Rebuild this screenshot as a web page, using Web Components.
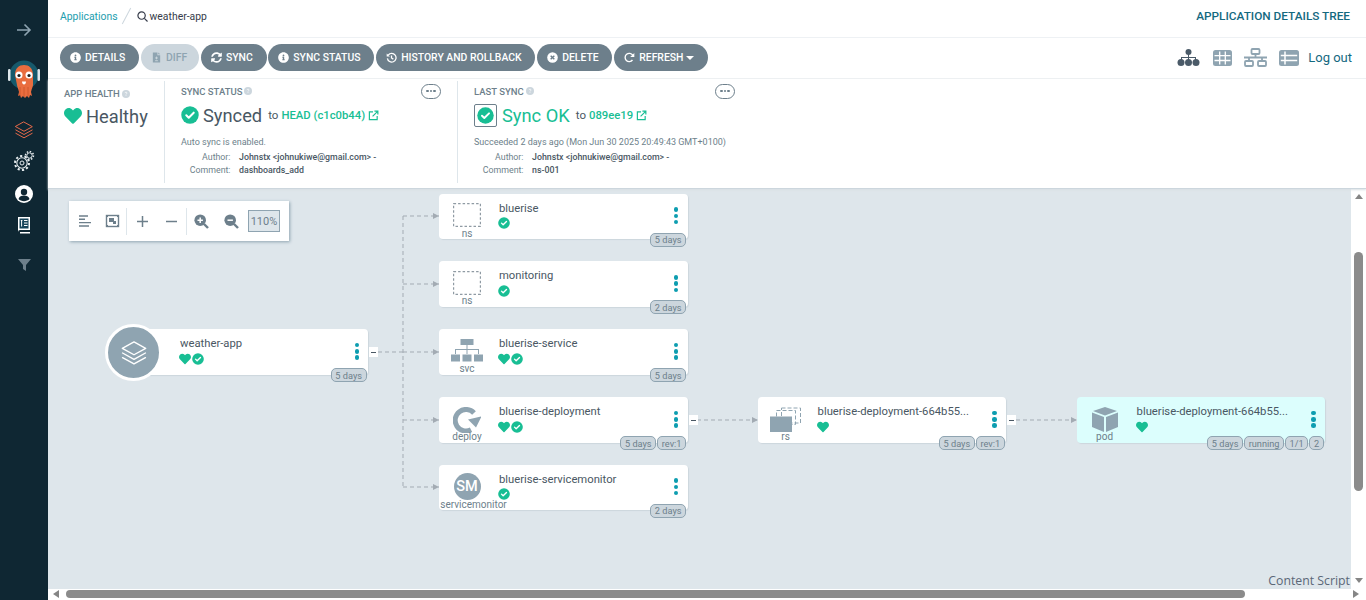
<!DOCTYPE html>
<html>
<head>
<meta charset="utf-8">
<title>weather-app</title>
<style>
  html, body { margin: 0; height: 100%; overflow: hidden; background: #fff; }
  body { font-family: Roboto, "Liberation Sans", sans-serif; color: #495763; }
</style>
</head>
<body>
<app-shell>
  <side-nav slot="nav"></side-nav>
  <top-bar slot="top"></top-bar>
  <action-bar slot="top">
    <action-button icon="info">DETAILS</action-button>
    <action-button icon="diff" disabled>DIFF</action-button>
    <action-button icon="sync">SYNC</action-button>
    <action-button icon="info">SYNC STATUS</action-button>
    <action-button icon="history">HISTORY AND ROLLBACK</action-button>
    <action-button icon="times">DELETE</action-button>
    <action-button icon="redo" caret>REFRESH</action-button>
  </action-bar>
  <status-summary slot="top"></status-summary>
  <graph-canvas slot="canvas">
    <graph-node app name="weather-app" health sync collapser style="left:77px;top:140px;width:243px">
      <node-tag slot="tags">5 days</node-tag>
    </graph-node>
    <graph-node kind="ns" name="bluerise" sync style="left:391px;top:4.6px">
      <node-tag slot="tags">5 days</node-tag>
    </graph-node>
    <graph-node kind="ns" name="monitoring" sync style="left:391px;top:72.3px">
      <node-tag slot="tags">2 days</node-tag>
    </graph-node>
    <graph-node kind="svc" name="bluerise-service" health sync style="left:391px;top:140px">
      <node-tag slot="tags">5 days</node-tag>
    </graph-node>
    <graph-node kind="deploy" name="bluerise-deployment" health sync collapser style="left:391px;top:208px">
      <node-tag slot="tags">5 days</node-tag>
      <node-tag slot="tags">rev:1</node-tag>
    </graph-node>
    <graph-node kind="servicemonitor" name="bluerise-servicemonitor" sync style="left:391px;top:275.6px">
      <node-tag slot="tags">2 days</node-tag>
    </graph-node>
    <graph-node kind="rs" name="bluerise-deployment-664b55..." health collapser style="left:709.6px;top:208px">
      <node-tag slot="tags">5 days</node-tag>
      <node-tag slot="tags">rev:1</node-tag>
    </graph-node>
    <graph-node kind="pod" name="bluerise-deployment-664b55..." health highlight style="left:1028.6px;top:208px">
      <node-tag slot="tags">5 days</node-tag>
      <node-tag slot="tags">running</node-tag>
      <node-tag slot="tags">1/1</node-tag>
      <node-tag slot="tags">2</node-tag>
    </graph-node>
  </graph-canvas>
</app-shell>

<script>
const GREEN = '#18be94';
const GRAY = '#8fa4b1';

const HEART = `<svg viewBox="0 0 512 512" width="100%" height="100%" style="display:block"><path fill="${GREEN}" d="M462.3 62.6C407.5 15.9 326 24.3 275.7 76.2L256 96.5l-19.7-20.3C186.1 24.3 104.5 15.9 49.7 62.6c-62.8 53.6-66.1 149.8-9.9 207.9l193.5 199.8c12.5 12.9 32.8 12.9 45.3 0l193.5-199.8c56.3-58.1 53-154.3-9.8-207.9z"/></svg>`;
const CHECK = `<svg viewBox="0 0 512 512" width="100%" height="100%" style="display:block"><circle cx="256" cy="256" r="248" fill="${GREEN}"/><path fill="none" stroke="#fff" stroke-width="58" stroke-linecap="round" stroke-linejoin="round" d="M150 262l70 70 142-142"/></svg>`;
const INFO_PATH = 'M256 8C119.043 8 8 119.083 8 256c0 136.997 111.043 248 248 248s248-111.003 248-248C504 119.083 392.957 8 256 8zm0 110c23.196 0 42 18.804 42 42s-18.804 42-42 42-42-18.804-42-42 18.804-42 42-42zm56 254c0 6.627-5.373 12-12 12h-88c-6.627 0-12-5.373-12-12v-24c0-6.627 5.373-12 12-12h12v-64h-12c-6.627 0-12-5.373-12-12v-24c0-6.627 5.373-12 12-12h64c6.627 0 12 5.373 12 12v100h12c6.627 0 12 5.373 12 12v24z';
const EXTERNAL = `<svg viewBox="0 0 24 24" width="100%" height="100%" style="display:block" fill="none" stroke="${GREEN}" stroke-width="2.6"><path d="M11 4H3v17h17v-8"/><path d="M10 14L21 3M14 2.5h7.5V10"/></svg>`;
const STACK = (color, w) => `<svg viewBox="0 0 24 24" width="100%" height="100%" style="display:block" fill="none" stroke="${color}" stroke-width="${w}" stroke-linejoin="round" stroke-linecap="round"><path d="M12 2.5l10 5.5-10 5.5L2 8z"/><path d="M2.2 12l9.8 5.4L21.8 12"/><path d="M2.2 16l9.8 5.4L21.8 16"/></svg>`;

const BUTTON_ICONS = {
  info: `<svg viewBox="0 0 512 512"><path fill="#fff" d="${INFO_PATH}"/></svg>`,
  diff: `<svg viewBox="0 0 24 24"><path fill="#8fa4b1" d="M4 1h10v6h6v16H4z"/><path fill="#8fa4b1" d="M16 1l4 4h-4z"/><path fill="none" stroke="#ccd6dd" stroke-width="2" d="M12 10v6M9 13h6M9 19h6"/></svg>`,
  sync: `<svg viewBox="0 0 512 512"><path fill="#fff" d="M370.72 133.28C339.458 104.008 298.888 87.962 255.848 88c-77.458.068-144.328 53.178-162.791 126.85-1.344 5.363-6.122 9.15-11.651 9.15H24.103c-7.498 0-13.194-6.807-11.807-14.176C33.933 94.924 134.813 8 256 8c66.448 0 126.791 26.136 171.315 68.685L463.03 40.97C478.149 25.851 504 36.559 504 57.941V192c0 13.255-10.745 24-24 24H345.941c-21.382 0-32.09-25.851-16.971-40.971l41.75-41.749zM32 296h134.059c21.382 0 32.09 25.851 16.971 40.971l-41.75 41.75c31.262 29.273 71.835 45.319 114.876 45.28 77.418-.07 144.315-53.144 162.787-126.849 1.344-5.363 6.122-9.15 11.651-9.15h57.304c7.498 0 13.194 6.807 11.807 14.176C478.067 417.076 377.187 504 256 504c-66.448 0-126.791-26.136-171.315-68.685L48.97 471.03C33.851 486.149 8 475.441 8 454.059V320c0-13.255 10.745-24 24-24z"/></svg>`,
  history: `<svg viewBox="0 0 24 24" fill="none" stroke="#fff" stroke-width="2.8"><path d="M5 6.5A9.5 9.5 0 1 1 3 14"/><path d="M1.5 3v7h7z" fill="#fff" stroke="none"/><path d="M12 7.5V13l4 2.5"/></svg>`,
  times: `<svg viewBox="0 0 24 24"><circle cx="12" cy="12" r="11.5" fill="#fff"/><path stroke="#6d7f8b" stroke-width="3" d="M8 8l8 8M16 8l-8 8"/></svg>`,
  redo: `<svg viewBox="0 0 24 24" fill="none" stroke="#fff" stroke-width="3"><path d="M18.5 17.5A9 9 0 1 1 19 7"/><path d="M22.5 2v9h-9z" fill="#fff" stroke="none"/></svg>`,
};

class AppShell extends HTMLElement {
  constructor() {
    super();
    this.attachShadow({ mode: 'open' });
    this.shadowRoot.innerHTML = `
      <style>
        :host { display: flex; height: 600px; width: 1366px; }
        .main { flex: 1; min-width: 0; display: flex; flex-direction: column; }
        .middle { flex: 1; min-height: 0; display: flex; }
        .horizontal { height: 11.5px; background: #fff; display: flex; align-items: center; padding: 0 7px 0 5px; }
      </style>
      <slot name="nav"></slot>
      <div class="main">
        <slot name="top"></slot>
        <div class="middle">
          <slot name="canvas"></slot>
          <scroll-track></scroll-track>
        </div>
        <div class="horizontal"><scroll-track horizontal></scroll-track></div>
      </div>`;
  }
}

class ScrollTrack extends HTMLElement {
  constructor() {
    super();
    this.attachShadow({ mode: 'open' });
  }

  connectedCallback() {
    const horizontal = this.hasAttribute('horizontal');
    this.shadowRoot.innerHTML = `
      <style>
        :host { display: flex; background: #fff; flex: none; }
        :host([horizontal]) { flex: 1; height: 100%; align-items: center; }
        :host(:not([horizontal])) { width: 15px; flex-direction: column; align-items: center; padding: 5px 0 6px; box-sizing: border-box; }
        .arrow { width: 0; height: 0; flex: none; }
        .up { border: 4.5px solid transparent; border-top: 0; border-bottom: 5px solid #858585; }
        .down { border: 4.5px solid transparent; border-bottom: 0; border-top: 5px solid #858585; margin-top: auto; }
        .left { border: 4.5px solid transparent; border-left: 0; border-right: 6px solid #858585; }
        .right { border: 4.5px solid transparent; border-right: 0; border-left: 6px solid #858585; margin-left: auto; }
        .thumb { background: #8b8b8b; border-radius: 5px; flex: none; }
        :host(:not([horizontal])) .thumb { width: 9px; height: 239px; margin-top: 53px; }
        :host([horizontal]) .thumb { height: 8px; width: 1179px; margin-left: 7px; }
      </style>
      <span class="arrow ${horizontal ? 'left' : 'up'}"></span>
      <span class="thumb"></span>
      <span class="arrow ${horizontal ? 'right' : 'down'}"></span>`;
  }
}

class SideNav extends HTMLElement {
  constructor() {
    super();
    this.attachShadow({ mode: 'open' });
    this.shadowRoot.innerHTML = `
      <style>
        :host { display: flex; flex-direction: column; align-items: center; width: 48px; flex: none; background: #0f2733; box-sizing: border-box; padding-top: 23px; }
        svg { display: block; flex: none; }
      </style>
      <svg width="16" height="14" viewBox="0 0 16 14" fill="none" stroke="#8fa4b1" stroke-width="1.6"><path d="M1 7h13M8.5 1.5L14 7l-5.500 5.500"/></svg>
      <svg style="margin-top:22px" width="32" height="42" viewBox="0 0 32 42">
        <circle cx="16" cy="16" r="14.500" fill="#17596b"/>
        <rect x="0" y="10" width="2.500" height="12" rx="1.200" fill="#dfe8ec"/>
        <rect x="29.500" y="10" width="2.500" height="12" rx="1.200" fill="#dfe8ec"/>
        <path d="M7 16c0-7 4-10 9-10s9 3 9 10v10c0 1-1 3-2 7l1 4-2-1-1 3-2-2-2 2-2-2-2 2-1-3-2 1 1-4c-1-4-2-6-2-7z" fill="#e96d3f"/>
        <path d="M12 28v9M16 28v10M20 28v9" stroke="#c9552b" stroke-width="0.800"/>
        <circle cx="11" cy="16" r="3.500" fill="#fff"/><circle cx="21" cy="16" r="3.500" fill="#fff"/>
        <circle cx="11" cy="16.500" r="1.600" fill="#222"/><circle cx="21" cy="16.500" r="1.600" fill="#222"/>
        <path d="M14 22.500h4c0 2-1 3-2 3s-2-1-2-3z" fill="#fff"/>
      </svg>
      <div style="width:20px;height:20px;margin-top:19px">${STACK('#e5694a', 1.200)}</div>
      <svg style="margin-top:10px" width="22" height="22" viewBox="0 0 22 22" fill="none" stroke="#e6ecef">
        <circle cx="9" cy="13" r="5.200" stroke-width="1.100"/>
        <circle cx="9" cy="13" r="7" stroke-width="2" stroke-dasharray="2.200 2.200"/>
        <circle cx="9" cy="13" r="2" stroke-width="1"/>
        <circle cx="16.500" cy="5.500" r="2.700" stroke-width="1"/>
        <circle cx="16.500" cy="5.500" r="4" stroke-width="1.500" stroke-dasharray="1.500 1.600"/>
      </svg>
      <svg style="margin-top:13px" width="18" height="18" viewBox="0 0 18 18">
        <circle cx="9" cy="9" r="9" fill="#fff"/>
        <circle cx="9" cy="7" r="3.200" fill="#0f2733"/>
        <path d="M3.500 14c.8-2.500 3-3.400 5.500-3.400s4.700.9 5.500 3.400c-1.400 1.300-3.300 2.200-5.500 2.200S4.900 15.300 3.500 14z" fill="#0f2733"/>
      </svg>
      <svg style="margin-top:13px" width="14" height="18" viewBox="0 0 14 18">
        <path d="M1 1h12v13H3a2 2 0 0 0-2 2z" fill="#fff"/>
        <path d="M3 16h10v1.500H3z" fill="#fff"/>
        <rect x="2.500" y="2.500" width="9" height="10" fill="#17445a"/>
        <path d="M7 4.500h3.500M7 7h3.500M7 9.500h3.500M3.800 4.500h1.600M4.600 4.500v6" stroke="#fff" stroke-width="1"/>
      </svg>
      <svg style="margin-top:25px" width="13" height="12" viewBox="0 0 13 12"><path d="M0 0h13L8 6v6L5 10V6z" fill="#6d7f8b"/></svg>`;
  }
}

class TopBar extends HTMLElement {
  constructor() {
    super();
    this.attachShadow({ mode: 'open' });
    this.shadowRoot.innerHTML = `
      <style>
        :host { display: flex; align-items: center; height: 38px; flex: none; box-sizing: border-box; padding: 0 16px 5px 12px; border-bottom: 1px solid #eef1f4; font-size: 10.400px; }
        a { color: #1c9dae; }
        .slash { width: 1px; height: 18px; background: #ccd6dd; transform: rotate(28deg); margin: 0 10px 0 8px; }
        svg { margin-right: 2px; }
        .crumb { color: #363c4a; }
        .title { margin-left: auto; font-size: 11.800px; font-weight: 500; color: #14697f; }
      </style>
      <a>Applications</a>
      <span class="slash"></span>
      <svg width="11" height="11" viewBox="0 0 12 12" fill="none" stroke="#363c4a" stroke-width="1.300"><circle cx="5" cy="5" r="4"/><path d="M8 8l3.500 3.500"/></svg>
      <span class="crumb">weather-app</span>
      <span class="title">APPLICATION DETAILS TREE</span>`;
  }
}

class ActionBar extends HTMLElement {
  constructor() {
    super();
    this.attachShadow({ mode: 'open' });
    this.shadowRoot.innerHTML = `
      <style>
        :host { display: flex; align-items: center; gap: 1.800px; height: 41px; flex: none; box-sizing: border-box; padding: 0 14px 1px 12px; border-bottom: 1px solid #eef1f4; }
        .views { margin-left: auto; display: flex; align-items: center; gap: 12px; color: #14697f; font-size: 13px; }
        svg { display: block; }
        .logout { margin-left: -3px; }
        .tree { margin-right: 1px; }
      </style>
      <slot></slot>
      <div class="views">
        <svg class="tree" width="23" height="17" viewBox="0 0 23 17" fill="#4a5a68">
          <circle cx="11.500" cy="3" r="3"/><path d="M11 5h1v3h7v3h-1V9h-6v2h-1V9H5v2H4V8h7z"/>
          <circle cx="4" cy="13.500" r="3.500"/><circle cx="11.500" cy="13.500" r="3.500"/><circle cx="19" cy="13.500" r="3.500"/>
        </svg>
        <svg width="19" height="16" viewBox="0 0 19 16"><rect width="19" height="16" rx="2.500" fill="${GRAY}"/><path d="M1.500 5.700h16M1.500 10.500h16M6.700 1.500v13M12.300 1.500v13" stroke="#fff" stroke-width="1.300"/></svg>
        <svg width="23" height="19" viewBox="0 0 23 19" fill="none" stroke="${GRAY}" stroke-width="1.800"><rect x="7.500" y="1" width="8" height="5" rx="1"/><rect x="1" y="13" width="8" height="5" rx="1"/><rect x="14" y="13" width="8" height="5" rx="1"/><path d="M11.500 6v3.500M0 9.500h23M5 9.500V13M18 9.500V13"/></svg>
        <svg width="20" height="16" viewBox="0 0 20 16"><rect width="20" height="16" rx="2.500" fill="${GRAY}"/><path d="M1.800 5.400h16.400M1.800 10.600h16.400M6 1.500v13" stroke="#fff" stroke-width="1.500"/></svg>
        <span class="logout">Log out</span>
      </div>`;
  }
}

class ActionButton extends HTMLElement {
  constructor() {
    super();
    this.attachShadow({ mode: 'open' });
  }

  connectedCallback() {
    const caret = this.hasAttribute('caret');
    this.shadowRoot.innerHTML = `
      <style>
        :host { display: inline-flex; align-items: center; height: 27px; padding: 0 13.800px 0 10px; gap: 4px; border-radius: 14px; background: #6d7f8b; color: #fff; font-size: 10.400px; font-weight: 500; white-space: nowrap; }
        :host([disabled]) { background: #ccd6dd; color: #8fa4b1; padding-right: 12px; }
        svg { width: 11px; height: 11px; display: block; flex: none; }
        .caret { border: 4px solid transparent; border-bottom: 0; border-top: 4px solid #fff; margin-left: -1px; }
      </style>
      ${BUTTON_ICONS[this.getAttribute('icon')]}
      <slot></slot>
      ${caret ? '<span class="caret"></span>' : ''}`;
  }
}

class StatusSummary extends HTMLElement {
  constructor() {
    super();
    this.attachShadow({ mode: 'open' });
    const help = `<svg class="help" viewBox="0 0 16 16"><circle cx="8" cy="8" r="8" fill="#ccd6dd"/><path d="M6 6.200c0-1.200 1-2 2-2s2 .7 2 1.900c0 1.500-2 1.500-2 3M8 10.500v1.500" fill="none" stroke="#fff" stroke-width="1.400"/></svg>`;
    const more = `<span class="more"><i></i><i></i><i></i></span>`;
    this.shadowRoot.innerHTML = `
      <style>
        :host { display: flex; height: 110px; flex: none; box-sizing: border-box; padding: 2px 0 5px; border-bottom: 1px solid #ccd6dd; box-shadow: 0 1px 2px #d8dfe4; position: relative; z-index: 1; }
        .panel { box-sizing: border-box; padding: 0 16px; border-right: 1px solid #dee6eb; }
        .panel:last-child { border-right: 0; }
        .health { width: 117px; padding-top: 7px; }
        .sync { width: 293px; padding-top: 2px; }
        .head { display: flex; align-items: center; justify-content: space-between; height: 16px; }
        .label { font-size: 9.500px; font-weight: 500; color: #6d7f8b; display: flex; align-items: center; gap: 2px; }
        .help { width: 8px; height: 8px; }
        .big { display: flex; align-items: center; height: 26px; font-size: 18.300px; color: #495763; white-space: nowrap; }
        .health .big { margin-top: 4px; }
        .sync .big { margin-top: 3px; }
        .ic { width: 18px; height: 18px; flex: none; margin-right: 4px; }
        .boxed { width: 23px; height: 23px; border: 1px solid #6d7f8b; border-radius: 2px; box-sizing: border-box; padding: 2px; margin-right: 5px; }
        .ok { color: ${GREEN}; }
        .to { font-size: 11.500px; margin-left: 6px; color: #495763; }
        .rev { font-size: 11.300px; font-weight: 500; color: ${GREEN}; margin-left: 3px; }
        .ext { width: 11px; height: 11px; margin-left: 3px; flex: none; }
        .msg { margin-top: 8px; font-size: 9px; line-height: 12px; color: #6d7f8b; white-space: nowrap; }
        .meta { display: grid; grid-template-columns: 49.500px auto; column-gap: 8.500px; margin-top: 3px; font-size: 8.800px; line-height: 13px; white-space: nowrap; }
        .meta span:nth-child(odd) { text-align: right; color: #6d7f8b; }
        .meta span:nth-child(even) { font-weight: 500; color: #495763; }
        .more { width: 20px; height: 15px; border: 1px solid #6d7f8b; border-radius: 8px; box-sizing: border-box; display: inline-flex; align-items: center; justify-content: center; gap: 1px; }
        .more i { width: 2.500px; height: 2.500px; border-radius: 50%; background: #6d7f8b; }
      </style>
      <div class="panel health">
        <div class="label">APP HEALTH ${help}</div>
        <div class="big"><span class="ic">${HEART}</span>Healthy</div>
      </div>
      <div class="panel sync">
        <div class="head"><div class="label">SYNC STATUS ${help}</div>${more}</div>
        <div class="big"><span class="ic">${CHECK}</span>Synced<span class="to">to</span><span class="rev">HEAD (c1c0b44)</span><span class="ext">${EXTERNAL}</span></div>
        <div class="msg">Auto sync is enabled.</div>
        <div class="meta"><span>Author:</span><span>Johnstx &lt;johnukiwe@gmail.com&gt; -</span><span>Comment:</span><span>dashboards_add</span></div>
      </div>
      <div class="panel sync">
        <div class="head"><div class="label">LAST SYNC ${help}</div>${more}</div>
        <div class="big ok"><span class="ic boxed">${CHECK}</span>Sync OK<span class="to">to</span><span class="rev">089ee19</span><span class="ext">${EXTERNAL}</span></div>
        <div class="msg">Succeeded 2 days ago (Mon Jun 30 2025 20:49:43 GMT+0100)</div>
        <div class="meta"><span>Author:</span><span>Johnstx &lt;johnukiwe@gmail.com&gt; -</span><span>Comment:</span><span>ns-001</span></div>
      </div>`;
  }
}

class GraphCanvas extends HTMLElement {
  constructor() {
    super();
    this.attachShadow({ mode: 'open' });
    const tip = (x, y) => `<path d="M${x - 6} ${y - 3}l6 3-6 3z" fill="#a3abb3" stroke="none"/>`;
    this.shadowRoot.innerHTML = `
      <style>
        :host { display: block; flex: 1; min-width: 0; position: relative; overflow: hidden; background: #dee6eb; }
        .edges { position: absolute; left: 0; top: 0; }
        .credit { position: absolute; right: 1px; bottom: 0; font: 12.300px/16px "Open Sans", sans-serif; color: #5b6777; }
      </style>
      <svg class="edges" width="1303" height="400" fill="none" stroke="#a3abb3" stroke-dasharray="4 3">
        <path d="M330 163H355M355 27V298M355 27H391M355 95H391M355 163H391M355 231H391M355 298H391"/>
        <path d="M649 231H710M968 231H1029"/>
        ${tip(391, 27)}${tip(391, 95)}${tip(391, 163)}${tip(391, 231)}${tip(391, 298)}${tip(710, 231)}${tip(1029, 231)}
      </svg>
      <zoom-tools></zoom-tools>
      <slot></slot>
      <span class="credit">Content Script</span>`;
  }
}

class ZoomTools extends HTMLElement {
  constructor() {
    super();
    this.attachShadow({ mode: 'open' });
    const glass = (plus) => `<svg width="15" height="15" viewBox="0 0 15 15"><circle cx="6.200" cy="6.200" r="5.800" fill="#6d7f8b"/><path d="M10 10l4 4" stroke="#6d7f8b" stroke-width="2.400"/><path d="M3.500 6.200h5.400${plus ? 'M6.200 3.500v5.400' : ''}" stroke="#fff" stroke-width="1.500"/></svg>`;
    this.shadowRoot.innerHTML = `
      <style>
        :host { position: absolute; left: 21px; top: 12px; display: flex; align-items: center; height: 40px; width: 220px; background: #fff; box-shadow: 1px 1px 3px #8fa4b1; box-sizing: border-box; padding-left: 10px; z-index: 2; }
        svg { display: block; flex: none; }
        .sep { width: 1px; height: 27px; background: #dee6eb; flex: none; }
        .pct { width: 32px; height: 22px; margin-left: 9px; box-sizing: border-box; border: 1px solid #8fa4b1; background: #dee6eb; display: flex; align-items: center; justify-content: center; font-size: 11px; color: #6d7f8b; }
      </style>
      <svg width="12" height="12" viewBox="0 0 12 12" stroke="#6d7f8b" stroke-width="1.400"><path d="M0 1h9M0 4.300h6M0 7.600h12M0 11h10"/></svg>
      <svg style="margin-left:14px" width="15" height="14" viewBox="0 0 15 14"><rect x="1.500" y="1.500" width="12" height="11" fill="none" stroke="#6d7f8b" stroke-width="1.400"/><path d="M1 1h2v2H1zM12 1h2v2h-2zM1 11h2v2H1zM12 11h2v2h-2z" fill="#6d7f8b"/><path d="M4 4h5v4H4zM8 7h3v3H8z" fill="#6d7f8b"/></svg>
      <span class="sep" style="margin-left:6px"></span>
      <svg style="margin-left:10px" width="11" height="11" viewBox="0 0 11 11" stroke="#6d7f8b" stroke-width="1.500"><path d="M0 5.500h11M5.500 0v11"/></svg>
      <svg style="margin-left:18px" width="11" height="11" viewBox="0 0 11 11" stroke="#6d7f8b" stroke-width="1.500"><path d="M0 5.500h11"/></svg>
      <span class="sep" style="margin-left:9px"></span>
      <span style="margin-left:7px">${glass(true)}</span>
      <span style="margin-left:15px">${glass(false)}</span>
      <span class="pct">110%</span>`;
  }
}

const KIND_ICONS = {
  ns: `<svg width="28" height="24" viewBox="0 0 28 24"><rect x="0.600" y="0.600" width="26.800" height="22.800" fill="none" stroke="#8f9aa3" stroke-width="1.200" stroke-dasharray="2.500 2"/></svg>`,
  svc: `<svg width="32" height="24" viewBox="0 0 32 24" fill="${GRAY}"><rect x="9.500" y="0" width="13" height="6"/><path d="M15.500 6h1v4H28v5h-1v-4H16.500v4h-1v-4H5v4H4v-5h11.500z"/><rect x="0" y="15.500" width="9" height="7"/><rect x="11.500" y="15.500" width="9" height="7"/><rect x="23" y="15.500" width="9" height="7"/></svg>`,
  deploy: `<svg width="28" height="26" viewBox="0 0 28 26"><path d="M18 22.800A10.800 10.800 0 1 1 21 6" fill="none" stroke="${GRAY}" stroke-width="5"/><path d="M15 12.500l13.500-3L23 20.500z" fill="${GRAY}"/></svg>`,
  rs: `<svg width="32" height="25" viewBox="0 0 32 25"><rect x="6.500" y="3.500" width="19" height="14" fill="none" stroke="${GRAY}" stroke-dasharray="4 2"/><rect x="11.500" y="1" width="19" height="15" fill="none" stroke="${GRAY}" stroke-dasharray="4 2"/><rect x="0" y="9.500" width="22" height="15.500" fill="${GRAY}"/></svg>`,
  pod: `<svg width="26" height="25" viewBox="0 0 26 25" fill="${GRAY}"><path d="M13 0l12 4-12 4.500L1 4z"/><path d="M0 5.500l12 4.500v15L0 20zM26 5.500L14 10v15l12-5z"/></svg>`,
};

class GraphNode extends HTMLElement {
  constructor() {
    super();
    this.attachShadow({ mode: 'open' });
  }

  connectedCallback() {
    const kind = this.getAttribute('kind') || '';
    const isApp = this.hasAttribute('app');
    let icon = KIND_ICONS[kind] || '';
    if (kind === 'servicemonitor') icon = '<span class="sm">SM</span>';
    this.shadowRoot.innerHTML = `
      <style>
        :host { position: absolute; display: flex; width: 248.500px; height: 45.500px; background: #fff; border-radius: 4px; box-shadow: 1px 1px 1px #ccd6dd; }
        :host([highlight]) { background: #dcfefd; }
        :host([kind="servicemonitor"]) .kind-label { padding-left: 13px; }
        .kind { width: 56px; flex: none; display: flex; flex-direction: column; align-items: center; padding-top: 9.500px; box-sizing: border-box; }
        .glyph { height: 25.500px; display: flex; align-items: flex-start; justify-content: center; }
        .kind-label { font-size: 10px; line-height: 10px; color: #6d7f8b; white-space: nowrap; }
        .sm { width: 27px; height: 27px; margin-top: -1px; border-radius: 50%; background: ${GRAY}; color: #fff; font-size: 14.500px; font-weight: 500; display: flex; align-items: center; justify-content: center; }
        .ring { position: absolute; left: -20px; top: -5px; width: 51px; height: 51px; border: 3px solid #fff; border-radius: 50%; background: ${GRAY}; display: flex; align-items: center; justify-content: center; }
        .ring div { width: 28px; height: 28px; }
        .text { flex: 1; min-width: 0; padding: 8px 0 0 4px; }
        :host([app]) .text { padding-left: 55px; }
        .name { font-size: 11.250px; line-height: 14px; color: #495763; white-space: nowrap; }
        .status { display: flex; gap: 1px; height: 12px; margin-top: 1.500px; margin-left: -1px; }
        .status span { width: 12px; height: 12px; display: block; }
        .dots { width: 23px; flex: none; display: flex; flex-direction: column; align-items: center; justify-content: center; gap: 1.800px; margin-bottom: 1px; }
        :host([app]) .dots { width: 22px; }
        .dots i { width: 4.500px; height: 4.500px; border-radius: 50%; background: #0d9db0; }
        .tags { position: absolute; right: 1.500px; bottom: -7.500px; display: flex; gap: 1.200px; }
        .fold { position: absolute; left: 100%; top: 18px; margin-left: 1px; width: 9px; height: 10px; background: #fff; display: flex; align-items: center; justify-content: center; }
        .fold i { width: 5px; height: 1px; background: #495763; }
      </style>
      ${isApp ? `<div class="ring"><div>${STACK('#fff', 1.200)}</div></div>` : `
      <div class="kind"><div class="glyph">${icon}</div><div class="kind-label">${kind}</div></div>`}
      <div class="text">
        <div class="name">${this.getAttribute('name')}</div>
        <div class="status">
          ${this.hasAttribute('health') ? `<span>${HEART}</span>` : ''}
          ${this.hasAttribute('sync') ? `<span>${CHECK}</span>` : ''}
        </div>
      </div>
      <div class="dots"><i></i><i></i><i></i></div>
      <div class="tags"><slot name="tags"></slot></div>
      ${this.hasAttribute('collapser') ? '<div class="fold"><i></i></div>' : ''}`;
  }
}

class NodeTag extends HTMLElement {
  constructor() {
    super();
    this.attachShadow({ mode: 'open' });
    this.shadowRoot.innerHTML = `
      <style>
        :host { display: inline-flex; align-items: center; height: 14px; box-sizing: border-box; padding: 0 3.500px; border: 1px solid #8fa4b1; border-radius: 5px; background: #ccd6dd; color: #6d7f8b; font-size: 9.200px; white-space: nowrap; }
      </style>
      <slot></slot>`;
  }
}

customElements.define('app-shell', AppShell);
customElements.define('scroll-track', ScrollTrack);
customElements.define('side-nav', SideNav);
customElements.define('top-bar', TopBar);
customElements.define('action-bar', ActionBar);
customElements.define('action-button', ActionButton);
customElements.define('status-summary', StatusSummary);
customElements.define('graph-canvas', GraphCanvas);
customElements.define('zoom-tools', ZoomTools);
customElements.define('graph-node', GraphNode);
customElements.define('node-tag', NodeTag);
</script>
</body>
</html>
